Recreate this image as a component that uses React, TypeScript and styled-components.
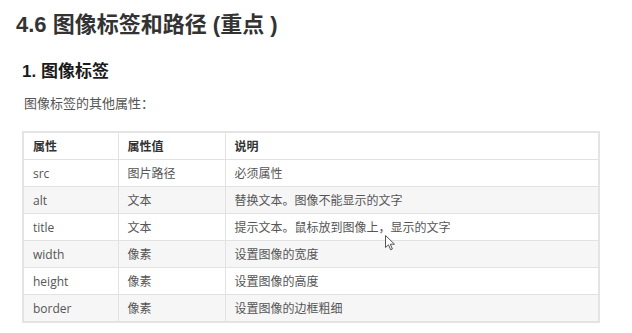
import styled, { createGlobalStyle } from "styled-components";

const GlobalStyle = createGlobalStyle`
  html, body {
    margin: 0;
    padding: 0;
    background: #fff;
  }
  body {
    font-family: "Open Sans", "Noto Sans CJK SC", sans-serif;
  }
`;

type Row = {
  name: string;
  value: string;
  desc: string;
};

const rows: Row[] = [
  { name: "src", value: "图片路径", desc: "必须属性" },
  { name: "alt", value: "文本", desc: "替换文本。图像不能显示的文字" },
  { name: "title", value: "文本", desc: "提示文本。鼠标放到图像上，显示的文字" },
  { name: "width", value: "像素", desc: "设置图像的宽度" },
  { name: "height", value: "像素", desc: "设置图像的高度" },
  { name: "border", value: "像素", desc: "设置图像的边框粗细" },
];

const App = () => {
  return (
    <>
      <GlobalStyle />
      <Page>
        <Title>4.6 图像标签和路径 (重点 )</Title>
        <SubTitle>1. 图像标签</SubTitle>
        <Intro>图像标签的其他属性：</Intro>
        <Table>
          <colgroup>
            <col style={{ width: 95 }} />
            <col style={{ width: 107 }} />
            <col />
          </colgroup>
          <thead>
            <tr>
              <Th>属性</Th>
              <Th>属性值</Th>
              <Th>说明</Th>
            </tr>
          </thead>
          <tbody>
            {rows.map((r, i) => (
              <Tr key={r.name} $striped={i % 2 === 1}>
                <Td>{r.name}</Td>
                <Td>{r.value}</Td>
                <Td>{r.desc}</Td>
              </Tr>
            ))}
          </tbody>
        </Table>
        <Cursor width="11" height="16" viewBox="0 0 11 16">
          <path
            d="M0.5 0.5 L0.5 12.5 L3.5 9.8 L5.6 14.8 L7.4 14 L5.4 9.2 L9.5 9.2 Z"
            fill="#fff"
            stroke="#555"
            strokeWidth="1"
            strokeLinejoin="round"
          />
        </Cursor>
      </Page>
    </>
  );
};

const Page = styled.div`
  position: relative;
  width: 632px;
  height: 333px;
  overflow: hidden;
  padding: 11px 0 0 0;
  box-sizing: border-box;
  font-family: "Open Sans", "Noto Sans CJK SC", sans-serif;
`;

const Title = styled.h1`
  margin: 0 0 0 16px;
  font-family: "Liberation Sans", "Noto Sans CJK SC", sans-serif;
  font-size: 22px;
  line-height: 28px;
  font-weight: 700;
  color: #333;
`;

const SubTitle = styled.h2`
  margin: 21px 0 0 22px;
  font-family: "Liberation Sans", "Noto Sans CJK SC", sans-serif;
  font-size: 17px;
  line-height: 24px;
  font-weight: 700;
  color: #1a1a1a;
`;

const Intro = styled.p`
  margin: 9px 0 0 24px;
  font-size: 13px;
  line-height: 20px;
  color: #555;
`;

const Table = styled.table`
  margin: 18px 0 0 22px;
  width: 578px;
  border-collapse: collapse;
  border: 2px solid #e4e4e4;
  font-size: 12px;
  color: #555;
  table-layout: fixed;
`;

const Th = styled.th`
  height: 26px;
  padding: 0 0 0 9px;
  text-align: left;
  font-weight: 700;
  color: #333;
  border: 1px solid #e2e2e2;
  background: #fff;
`;

const Tr = styled.tr<{ $striped: boolean }>`
  background: ${(p) => (p.$striped ? "#f6f6f6" : "#fff")};
`;

const Td = styled.td`
  height: 26px;
  padding: 0 0 0 9px;
  border: 1px solid #e2e2e2;
  white-space: nowrap;
`;

const Cursor = styled.svg`
  position: absolute;
  left: 385px;
  top: 235px;
`;

export default App;
